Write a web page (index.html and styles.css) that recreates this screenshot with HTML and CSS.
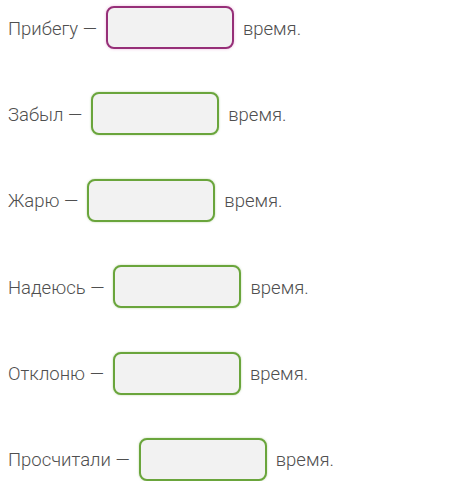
FILE: index.html
```html
<!DOCTYPE html>
<html lang="ru">
<head>
<meta charset="utf-8">
<link rel="stylesheet" href="styles.css">
</head>
<body>
<div class="list">
  <div class="row"><span class="label">Прибегу —</span><span class="field field-active"></span><span class="tail">время.</span></div>
  <div class="row"><span class="label">Забыл —</span><span class="field"></span><span class="tail">время.</span></div>
  <div class="row"><span class="label">Жарю —</span><span class="field"></span><span class="tail">время.</span></div>
  <div class="row"><span class="label">Надеюсь —</span><span class="field"></span><span class="tail">время.</span></div>
  <div class="row"><span class="label">Отклоню —</span><span class="field"></span><span class="tail">время.</span></div>
  <div class="row"><span class="label">Просчитали —</span><span class="field"></span><span class="tail">время.</span></div>
</div>
</body>
</html>
```

FILE: styles.css
```css
html, body {
  margin: 0;
  padding: 0;
  background: #ffffff;
}
body {
  font-family: Roboto, "Noto Sans", sans-serif;
  font-weight: 300;
  font-size: 18.5px;
  color: #4f4f4f;
}
.list {
  display: flex;
  flex-direction: column;
  gap: 43.4px;
  padding: 6px 0 0 8px;
}
.row {
  display: flex;
  align-items: center;
  gap: 9px;
  height: 43px;
}
.field {
  box-sizing: border-box;
  width: 128px;
  height: 43px;
  border: 2.5px solid #6aa53c;
  border-radius: 8px;
  background: #f2f2f2;
  box-shadow: 0 0 2px rgba(106, 165, 60, 0.5);
}
.field-active {
  border-color: #962f78;
  box-shadow: 0 0 3px rgba(200, 60, 160, 0.35);
}
.tail {
  margin-top: 2px;
}
.label {
  margin-top: 2px;
}
```
